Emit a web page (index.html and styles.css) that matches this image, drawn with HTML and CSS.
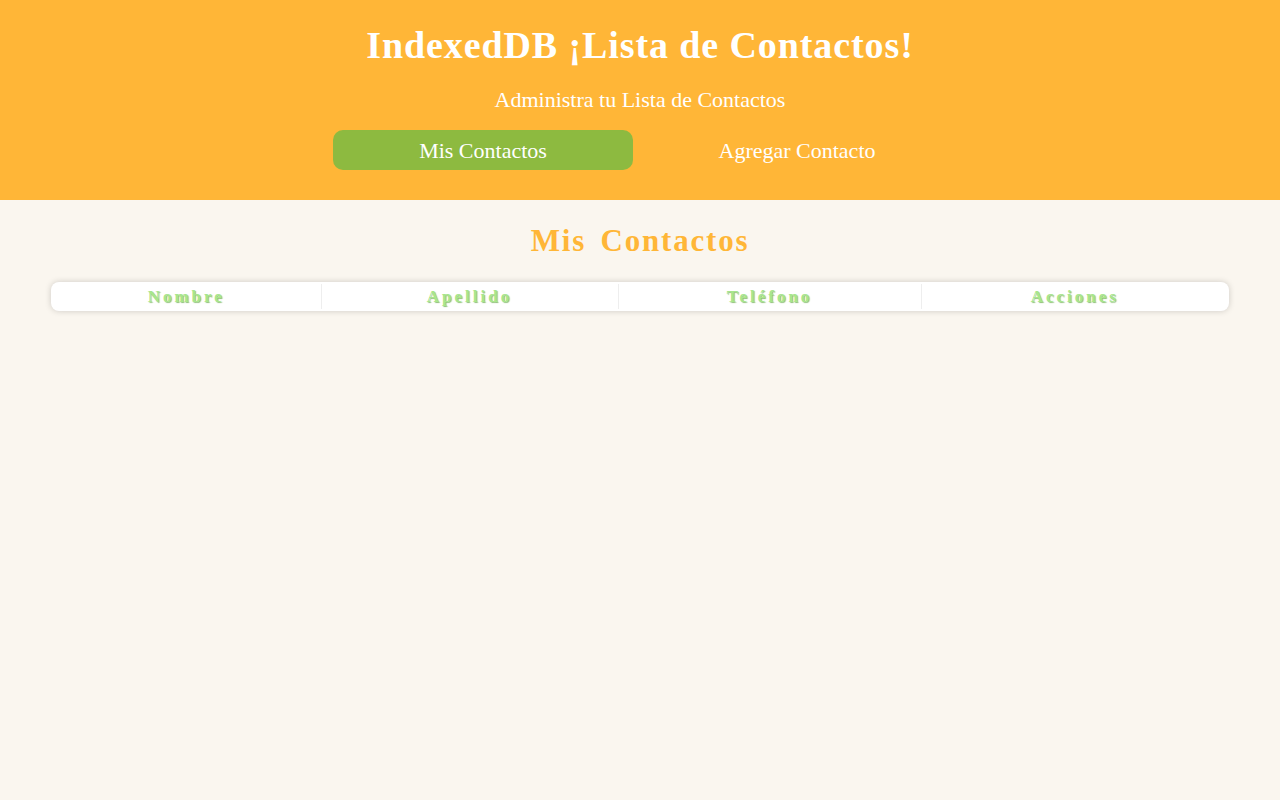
FILE: index.html
```html
<!DOCTYPE html>
<html lang="es">
<head>
<meta charset="utf-8">
<title>IndexedDB Lista de Contactos</title>
<link rel="stylesheet" href="styles.css">
</head>
<body>
<header class="header">
  <h1 class="title">IndexedDB ¡Lista de Contactos!</h1>
  <p class="subtitle">Administra tu Lista de Contactos</p>
  <nav class="nav">
    <a class="nav-link active" href="#">Mis Contactos</a>
    <a class="nav-link" href="#">Agregar Contacto</a>
  </nav>
</header>
<main class="main">
  <h2 class="section-title">Mis Contactos</h2>
  <div class="table-wrap">
    <table class="table">
      <thead>
        <tr>
          <th class="col-1">Nombre</th>
          <th class="col-2">Apellido</th>
          <th class="col-3">Teléfono</th>
          <th class="col-4">Acciones</th>
        </tr>
      </thead>
      <tbody></tbody>
    </table>
  </div>
</main>
</body>
</html>
```
FILE: styles.css
```css
* { box-sizing: border-box; }
html, body { margin: 0; padding: 0; }
body {
  background: #faf6ef;
  font-family: "Liberation Serif", "DejaVu Serif", serif;
  min-height: 800px;
}
.header {
  background: #ffb637;
  height: 200px;
  padding-top: 22px;
  text-align: center;
  color: #fff;
}
.title {
  margin: 0;
  font-size: 38px;
  line-height: 46px;
  font-weight: 700;
  letter-spacing: 0.9px;
}
.subtitle {
  margin: 19px 0 0;
  font-size: 22px;
  line-height: 26px;
}
.nav {
  display: flex;
  justify-content: center;
  gap: 14px;
  margin-top: 17px;
}
.nav-link {
  width: 300px;
  height: 40px;
  line-height: 41px;
  border-radius: 10px;
  color: #fff;
  text-decoration: none;
  font-size: 22px;
}
.nav-link.active { background: #8dba40; }
.main {
  padding: 0 51px;
}
.section-title {
  margin: 22px 0 0;
  text-align: center;
  color: #ffb637;
  font-size: 31px;
  line-height: 38px;
  letter-spacing: 1.8px;
  word-spacing: 5px;
  font-weight: 700;
}
.table-wrap {
  margin-top: 22px;
  background: #fff;
  border-radius: 8px;
  box-shadow: 0 0 6px rgba(0,0,0,0.18);
  padding: 2px 1px;
}
.table {
  width: 100%;
  border-collapse: collapse;
}
.table th {
  height: 25px;
  padding: 0;
  font-size: 17px;
  line-height: 23px;
  font-weight: 700;
  letter-spacing: 3px;
  color: #a8e68c;
  text-shadow: 1px 1px 1px #8fbf78;
  border-left: 1px solid #eeeeee;
}
.table th:first-child { border-left: none; }
.col-1 { width: 269px; }
.col-2 { width: 297px; }
.col-3 { width: 303px; }
.col-4 { width: auto; }
```
